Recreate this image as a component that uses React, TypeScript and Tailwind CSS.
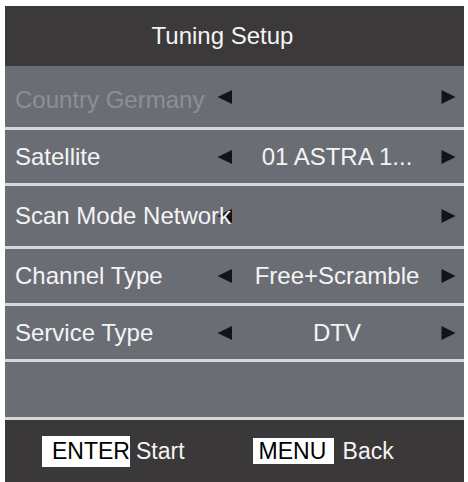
import React from "react";

const LeftArrow = () => (
  <svg width="16" height="16" viewBox="0 0 16 16" className="shrink-0">
    <polygon points="0.5,8 15,1 15,15" fill="#141418" />
  </svg>
);
const RightArrow = () => (
  <svg width="15" height="16" viewBox="0 0 15 16" className="shrink-0">
    <polygon points="14.5,8 0.5,1 0.5,15" fill="#141418" />
  </svg>
);

const Divider = () => <div className="h-[3px] bg-[#d7d8dd]" />;

function Row({
  label,
  value,
  h,
  dim,
}: {
  label: string;
  value?: string;
  h: string;
  dim?: boolean;
}) {
  return (
    <div className={`flex items-center bg-[#6b6d75] ${h}`}>
      <div
        className={`relative z-10 w-[212px] shrink-0 whitespace-nowrap pl-[10px] ${
          dim ? "text-[#8d8f96] pt-[6px]" : "text-[#f4f4f4]"
        }`}
      >
        {label}
      </div>
      <LeftArrow />
      <div className="flex-1 text-center text-[#f4f4f4] whitespace-nowrap">{value ?? ""}</div>
      <div className="mr-[8px]">
        <RightArrow />
      </div>
    </div>
  );
}

export default function App() {
  return (
    <div
      className="w-[468px] h-[482px] bg-white pt-[6px] overflow-hidden"
      style={{ fontFamily: '"Liberation Sans", Arial, sans-serif' }}
    >
      <div className="ml-[5px] w-[459px] text-[24px] leading-none">
        <div className="h-[60px] bg-[#3c393b] flex items-center justify-center pr-[24px] text-[#f4f4f4]">
          Tuning Setup
        </div>
        <Row label="Country Germany" h="h-[61px]" dim />
        <Divider />
        <Row label="Satellite" value="01 ASTRA 1..." h="h-[53px]" />
        <Divider />
        <Row label="Scan Mode Network" h="h-[60px]" />
        <Divider />
        <Row label="Channel Type" value="Free+Scramble" h="h-[54px]" />
        <Divider />
        <Row label="Service Type" value="DTV" h="h-[53px]" />
        <Divider />
        <div className="h-[55px] bg-[#6b6d75]" />
        <Divider />
        <div className="h-[62px] bg-[#3b383a] flex items-center text-[23px]">
          <div className="ml-[37px] h-[31px] w-[88px] bg-white text-black flex items-center pl-[10px]">
            ENTER
          </div>
          <div className="ml-[6px] text-[#f4f4f4]">Start</div>
          <div className="ml-[68px] h-[26px] w-[81px] bg-white text-black flex items-center pl-[6px]">
            MENU
          </div>
          <div className="ml-[9px] text-[#f4f4f4]">Back</div>
        </div>
      </div>
    </div>
  );
}
